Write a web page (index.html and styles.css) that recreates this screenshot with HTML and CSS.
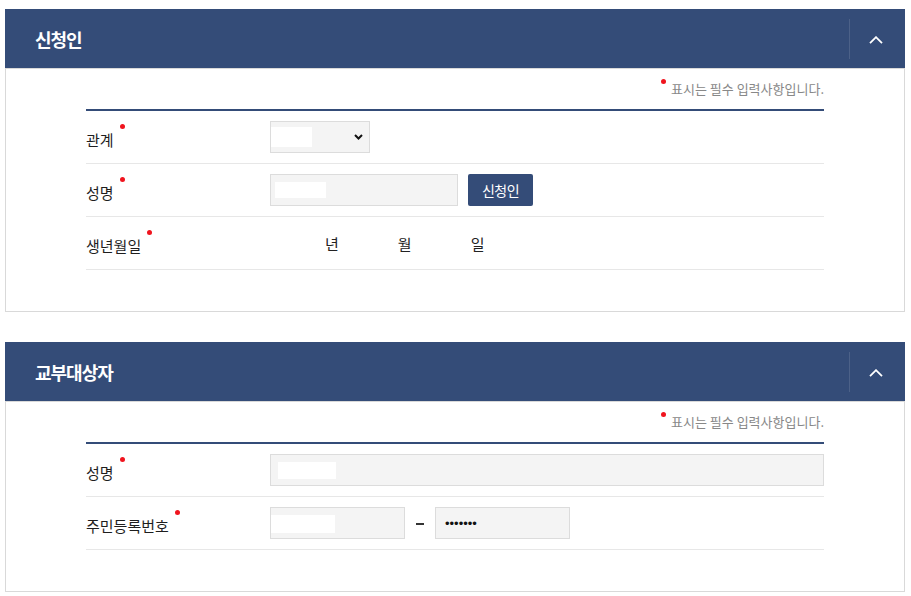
FILE: index.html
```html
<!DOCTYPE html>
<html>
<head>
<meta http-equiv="Content-Type" content="text/html;charset=UTF-8" />
<title>신청서 작성</title>
<link rel="stylesheet" href="styles.css">
</head>
<body>

<div class="wrap">

    <!-- 신청인 -->
    <div class="box">
        <div class="box-head">
            <h2>신청인</h2>
            <button class="fold" type="button">
                <svg width="14" height="8" viewBox="0 0 14 8"><polyline points="1,7.2 7,1.2 13,7.2" fill="none" stroke="#fff" stroke-width="1.8" /></svg>
            </button>
        </div>
        <div class="box-body">
            <p class="note"><i class="req"></i>표시는 필수 입력사항입니다.</p>
            <ul class="rows">
                <li>
                    <span class="lbl">관계<i class="req"></i></span>
                    <div class="sel">
                        <span class="blank b-sel"></span>
                        <svg width="9" height="6" viewBox="0 0 9 6"><polyline points="1,1 4.5,4.5 8,1" fill="none" stroke="#111" stroke-width="2" /></svg>
                    </div>
                </li>
                <li>
                    <span class="lbl">성명<i class="req"></i></span>
                    <div class="inp name"><span class="blank b-name"></span></div>
                    <button class="btn" type="button">신청인</button>
                </li>
                <li>
                    <span class="lbl">생년월일<i class="req"></i></span>
                    <div class="date">
                        <span class="dsel"></span><span class="unit">년</span>
                        <span class="dsel"></span><span class="unit">월</span>
                        <span class="dsel"></span><span class="unit">일</span>
                    </div>
                </li>
            </ul>
        </div>
    </div>

    <!-- 교부대상자 -->
    <div class="box">
        <div class="box-head">
            <h2>교부대상자</h2>
            <button class="fold" type="button">
                <svg width="14" height="8" viewBox="0 0 14 8"><polyline points="1,7.2 7,1.2 13,7.2" fill="none" stroke="#fff" stroke-width="1.8" /></svg>
            </button>
        </div>
        <div class="box-body">
            <p class="note"><i class="req"></i>표시는 필수 입력사항입니다.</p>
            <ul class="rows">
                <li>
                    <span class="lbl">성명<i class="req"></i></span>
                    <div class="inp wide"><span class="blank b-wide"></span></div>
                </li>
                <li>
                    <span class="lbl">주민등록번호<i class="req"></i></span>
                    <div class="inp half first"><span class="blank b-half"></span></div>
                    <span class="dash"></span>
                    <div class="inp half last"><span class="pw">•••••••</span></div>
                </li>
            </ul>
        </div>
    </div>

</div>

</body>
</html>
```

FILE: styles.css
```css
* { box-sizing: border-box; }
html,body {
    margin: 0; padding: 0;
    background: #FFF; color: #222;
    font-family: "Noto Sans CJK KR", "Noto Sans", sans-serif;
}
ul, li { list-style-type: none; margin: 0; padding: 0; }

.wrap { width: 911px; padding: 9px 6px 0 5px; }

.box { margin-bottom: 30px; }
    .box-head {
        display: flex; align-items: center;
        height: 59px; padding-left: 30px;
        background: #344C78;
    }
    .box-head h2 { flex: 1; margin: 0; color: #FFF; font-size: 18px; font-weight: bold; letter-spacing: -1px; }

    .fold {
        display: flex; align-items: center; justify-content: center;
        width: 52px; height: 40px; margin-right: 4px; padding: 3px 0 0 0;
        background: transparent; border: 0; border-left: 1px solid rgba(255,255,255,.12);
        cursor: pointer;
    }

    .box-body {
        border: 1px solid #D9D9D9;
        padding: 10px 80px 41px 80px;
    }

.note {
    margin: 0 0 10px 0; height: 20px; line-height: 20px;
    text-align: right; color: #888; font-size: 13px; letter-spacing: 0;
}
    .note .req { margin: 0 5px 0 0; vertical-align: 10px; }

.req {
    display: inline-block; width: 5px; height: 5px; border-radius: 50%;
    background: #F0141E; margin-left: 6px; vertical-align: 17px;
}

.rows { border-top: 2px solid #344C78; }
    .rows li {
        display: flex; align-items: center;
        height: 53px; border-bottom: 1px solid #E7E7E7;
    }
    .lbl { width: 184px; flex: none; font-size: 15px; color: #1E1E1E; }

.blank { display: block; background: #FFF; }
    .b-sel  { width: 41px; height: 20px; }
    .b-name { width: 51px; height: 16px; }
    .b-wide { width: 58px; height: 17px; }
    .b-half { width: 64px; height: 18px; margin-top: 1px; }

.sel {
    display: flex; align-items: center; justify-content: space-between;
    width: 100px; height: 32px; padding-right: 6px;
    background: #F4F4F4; border: 1px solid #DCDCDC;
}

.inp {
    display: flex; align-items: center;
    height: 32px; background: #F4F4F4; border: 1px solid #DCDCDC;
}
    .inp.name  { width: 188px; padding-left: 4px; }
    .inp.wide  { flex: 1; padding-left: 7px; }
    .inp.half  { width: 135px; }
    .inp.first { padding-left: 0; }
    .inp.last  { padding-left: 9px; }

.pw { font-family: "Liberation Sans", sans-serif; font-size: 13px; color: #111; line-height: 1; }

.dash { display: block; width: 8px; height: 2px; margin: 2px 11px 0 11px; background: #333; }

.btn {
    width: 65px; height: 32px; margin-left: 10px;
    background: #344C78; color: #FFF; border: 0; border-radius: 2px;
    font-family: "Noto Sans CJK KR", sans-serif; font-size: 14px; letter-spacing: -0.5px;
    cursor: pointer;
}

.date { display: flex; align-items: center; font-size: 15px; }
    .date .dsel { display: block; width: 51px; height: 20px; }
    .date .unit { margin: 0 4px; }
```
